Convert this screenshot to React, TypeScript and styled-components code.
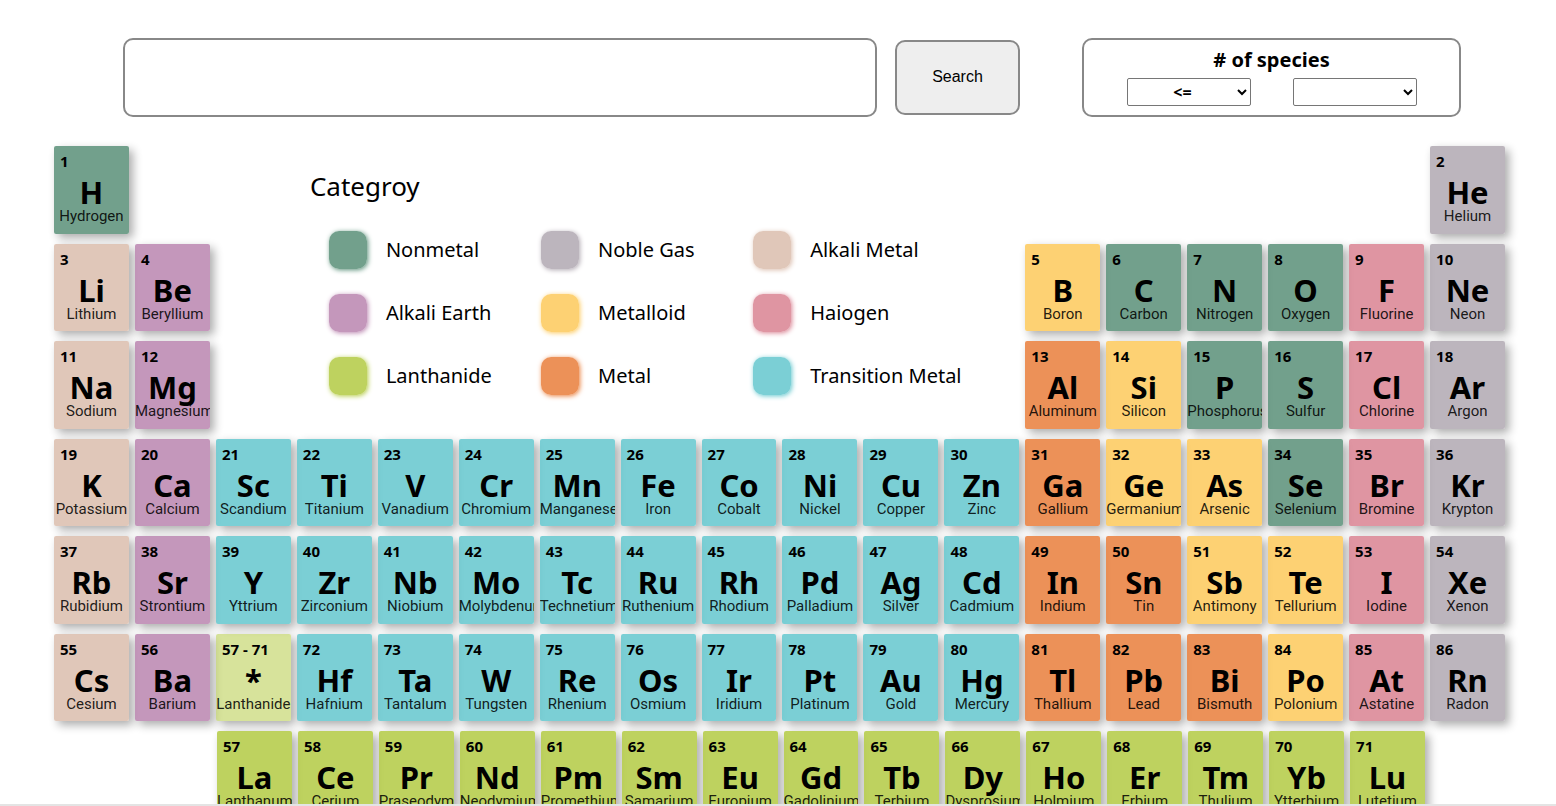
import React from 'react';
import styled, { createGlobalStyle } from 'styled-components';

const GlobalStyle = createGlobalStyle`
  *, *::before, *::after { box-sizing: border-box; }
  body { margin: 0; background: #fff; color: #000; font-family: 'Noto Sans', 'Open Sans', sans-serif; }
`;

const categories = {
  nonmetal: { label: 'Nonmetal', rgb: '89, 143, 120' },
  noble: { label: 'Noble Gas', rgb: '176, 168, 177' },
  alkali: { label: 'Alkali Metal', rgb: '219, 189, 173' },
  earth: { label: 'Alkali Earth', rgb: '186, 133, 175' },
  metalloid: { label: 'Metalloid', rgb: '253, 201, 91' },
  halogen: { label: 'Haiogen', rgb: '217, 130, 146' },
  lanthanide: { label: 'Lanthanide', rgb: '179, 202, 67' },
  metal: { label: 'Metal', rgb: '233, 126, 59' },
  transition: { label: 'Transition Metal', rgb: '100, 199, 206' },
};

type Category = keyof typeof categories;
type Entry = [string, string, string, Category, number, number];

const k: Record<string, Category> = {
  n: 'nonmetal', g: 'noble', a: 'alkali', e: 'earth', d: 'metalloid',
  h: 'halogen', l: 'lanthanide', m: 'metal', t: 'transition',
};

const elements: Entry[] = [
  ['1', 'H', 'Hydrogen', k.n, 1, 1],
  ['2', 'He', 'Helium', k.g, 1, 18],
  ['3', 'Li', 'Lithium', k.a, 2, 1],
  ['4', 'Be', 'Beryllium', k.e, 2, 2],
  ['5', 'B', 'Boron', k.d, 2, 13],
  ['6', 'C', 'Carbon', k.n, 2, 14],
  ['7', 'N', 'Nitrogen', k.n, 2, 15],
  ['8', 'O', 'Oxygen', k.n, 2, 16],
  ['9', 'F', 'Fluorine', k.h, 2, 17],
  ['10', 'Ne', 'Neon', k.g, 2, 18],
  ['11', 'Na', 'Sodium', k.a, 3, 1],
  ['12', 'Mg', 'Magnesium', k.e, 3, 2],
  ['13', 'Al', 'Aluminum', k.m, 3, 13],
  ['14', 'Si', 'Silicon', k.d, 3, 14],
  ['15', 'P', 'Phosphorus', k.n, 3, 15],
  ['16', 'S', 'Sulfur', k.n, 3, 16],
  ['17', 'Cl', 'Chlorine', k.h, 3, 17],
  ['18', 'Ar', 'Argon', k.g, 3, 18],
  ['19', 'K', 'Potassium', k.a, 4, 1],
  ['20', 'Ca', 'Calcium', k.e, 4, 2],
  ['21', 'Sc', 'Scandium', k.t, 4, 3],
  ['22', 'Ti', 'Titanium', k.t, 4, 4],
  ['23', 'V', 'Vanadium', k.t, 4, 5],
  ['24', 'Cr', 'Chromium', k.t, 4, 6],
  ['25', 'Mn', 'Manganese', k.t, 4, 7],
  ['26', 'Fe', 'Iron', k.t, 4, 8],
  ['27', 'Co', 'Cobalt', k.t, 4, 9],
  ['28', 'Ni', 'Nickel', k.t, 4, 10],
  ['29', 'Cu', 'Copper', k.t, 4, 11],
  ['30', 'Zn', 'Zinc', k.t, 4, 12],
  ['31', 'Ga', 'Gallium', k.m, 4, 13],
  ['32', 'Ge', 'Germanium', k.d, 4, 14],
  ['33', 'As', 'Arsenic', k.d, 4, 15],
  ['34', 'Se', 'Selenium', k.n, 4, 16],
  ['35', 'Br', 'Bromine', k.h, 4, 17],
  ['36', 'Kr', 'Krypton', k.g, 4, 18],
  ['37', 'Rb', 'Rubidium', k.a, 5, 1],
  ['38', 'Sr', 'Strontium', k.e, 5, 2],
  ['39', 'Y', 'Yttrium', k.t, 5, 3],
  ['40', 'Zr', 'Zirconium', k.t, 5, 4],
  ['41', 'Nb', 'Niobium', k.t, 5, 5],
  ['42', 'Mo', 'Molybdenum', k.t, 5, 6],
  ['43', 'Tc', 'Technetium', k.t, 5, 7],
  ['44', 'Ru', 'Ruthenium', k.t, 5, 8],
  ['45', 'Rh', 'Rhodium', k.t, 5, 9],
  ['46', 'Pd', 'Palladium', k.t, 5, 10],
  ['47', 'Ag', 'Silver', k.t, 5, 11],
  ['48', 'Cd', 'Cadmium', k.t, 5, 12],
  ['49', 'In', 'Indium', k.m, 5, 13],
  ['50', 'Sn', 'Tin', k.m, 5, 14],
  ['51', 'Sb', 'Antimony', k.d, 5, 15],
  ['52', 'Te', 'Tellurium', k.d, 5, 16],
  ['53', 'I', 'Iodine', k.h, 5, 17],
  ['54', 'Xe', 'Xenon', k.g, 5, 18],
  ['55', 'Cs', 'Cesium', k.a, 6, 1],
  ['56', 'Ba', 'Barium', k.e, 6, 2],
  ['57 - 71', '*', 'Lanthanide', k.l, 6, 3],
  ['72', 'Hf', 'Hafnium', k.t, 6, 4],
  ['73', 'Ta', 'Tantalum', k.t, 6, 5],
  ['74', 'W', 'Tungsten', k.t, 6, 6],
  ['75', 'Re', 'Rhenium', k.t, 6, 7],
  ['76', 'Os', 'Osmium', k.t, 6, 8],
  ['77', 'Ir', 'Iridium', k.t, 6, 9],
  ['78', 'Pt', 'Platinum', k.t, 6, 10],
  ['79', 'Au', 'Gold', k.t, 6, 11],
  ['80', 'Hg', 'Mercury', k.t, 6, 12],
  ['81', 'Tl', 'Thallium', k.m, 6, 13],
  ['82', 'Pb', 'Lead', k.m, 6, 14],
  ['83', 'Bi', 'Bismuth', k.m, 6, 15],
  ['84', 'Po', 'Polonium', k.d, 6, 16],
  ['85', 'At', 'Astatine', k.h, 6, 17],
  ['86', 'Rn', 'Radon', k.g, 6, 18],
];

const lanthanides: [string, string][] = [
  ['La', 'Lanthanum'], ['Ce', 'Cerium'], ['Pr', 'Praseodymium'], ['Nd', 'Neodymium'],
  ['Pm', 'Promethium'], ['Sm', 'Samarium'], ['Eu', 'Europium'], ['Gd', 'Gadolinium'],
  ['Tb', 'Terbium'], ['Dy', 'Dysprosium'], ['Ho', 'Holmium'], ['Er', 'Erbium'],
  ['Tm', 'Thulium'], ['Yb', 'Ytterbium'], ['Lu', 'Lutetium'],
];

const Page = styled.main`
  height: 100vh;
  overflow: hidden;
  border-bottom: 2px solid #e4e4e4;
`;

const SearchBar = styled.form`
  display: flex;
  align-items: center;
  padding: 38px 95px 0 123px;
`;

const SearchInput = styled.input`
  flex: 1;
  min-width: 0;
  height: 79px;
  padding: 0 16px;
  border: 2px solid #888;
  border-radius: 10px;
  font: 20px 'Noto Sans', sans-serif;
`;

const SearchButton = styled.button`
  width: 125px;
  height: 75px;
  margin: 0 62px 0 18px;
  padding: 0 0 2px;
  border: 2px solid #888;
  border-radius: 10px;
  background: #eee;
  color: #000;
  font: 16px 'Liberation Sans', Arial, sans-serif;
`;

const SpeciesBox = styled.fieldset`
  display: flex;
  flex-direction: column;
  align-items: center;
  width: 379px;
  height: 79px;
  margin: 0;
  padding: 2px 0 0;
  border: 2px solid #888;
  border-radius: 10px;
`;

const SpeciesTitle = styled.div`
  font-size: 20px;
  font-weight: 700;
  line-height: 36px;
`;

const SelectRow = styled.div`
  display: flex;
  gap: 42px;
`;

const Select = styled.select`
  width: 124px;
  height: 28px;
  border: 1px solid #767676;
  border-radius: 2px;
  background: #fff;
  color: #000;
  font: 700 16px 'Noto Sans', sans-serif;
  text-align: center;
`;

const Table = styled.section`
  display: grid;
  grid-template-columns: repeat(18, minmax(0, 1fr));
  gap: 10px 6px;
  margin: 29px 51px 0 54px;
`;

const LanthanideRow = styled.section`
  display: grid;
  grid-template-columns: repeat(15, minmax(0, 1fr));
  gap: 6px;
  margin: 10px 131px 0 217px;
`;

const Tile = styled.button<{ $rgb: string; $faded?: boolean; $row?: number; $col?: number }>`
  grid-row: ${(p) => p.$row ?? 'auto'};
  grid-column: ${(p) => p.$col ?? 'auto'};
  display: flex;
  flex-direction: column;
  aspect-ratio: 107 / 125;
  min-width: 0;
  padding: 5px 0 0;
  overflow: hidden;
  border: 0;
  border-radius: 2px;
  background: rgba(${(p) => p.$rgb}, ${(p) => (p.$faded ? 0.53 : 0.85)});
  box-shadow: 4px 4px 10px rgba(0, 0, 0, 0.33);
  color: #000;
  font-family: 'Noto Sans', 'Open Sans', sans-serif;
`;

const AtomicNumber = styled.span`
  align-self: flex-start;
  padding-left: 6px;
  font-size: 15px;
  font-weight: 700;
  line-height: 20px;
  white-space: nowrap;
`;

const AtomicSymbol = styled.span`
  align-self: center;
  margin-top: 4px;
  font-size: 31px;
  font-weight: 700;
  line-height: 34px;
`;

const ElementName = styled.span`
  width: 100%;
  color: rgba(0, 0, 0, 0.87);
  font-family: Roboto, sans-serif;
  font-size: 15px;
  line-height: 14px;
  text-align: center;
  white-space: nowrap;
`;

const Legend = styled.div`
  grid-row: 1 / 4;
  grid-column: 3 / 13;
  padding: 21px 54px 0 94px;
`;

const LegendTitle = styled.h2`
  margin: 0;
  font-size: 26px;
  font-weight: 400;
  line-height: 38px;
`;

const LegendList = styled.ul`
  display: grid;
  grid-template-columns: repeat(3, minmax(0, 1fr));
  gap: 25px 0;
  margin: 26px 0 0 19px;
  padding: 0;
  list-style: none;
`;

const LegendItem = styled.li`
  display: flex;
  align-items: center;
  gap: 19px;
  font-size: 20px;
  line-height: 38px;
  white-space: nowrap;
`;

const Swatch = styled.span<{ $rgb: string }>`
  flex: none;
  width: 38px;
  height: 38px;
  border-radius: 10px;
  background: rgba(${(p) => p.$rgb}, 0.85);
  box-shadow: 1px 1px 5px rgb(${(p) => p.$rgb});
`;

interface ElementTileProps {
  number: string;
  symbol: string;
  name: string;
  category: Category;
  row?: number;
  col?: number;
}

function ElementTile({ number, symbol, name, category, row, col }: ElementTileProps) {
  return (
    <Tile type="button" $rgb={categories[category].rgb} $faded={symbol === '*'} $row={row} $col={col}>
      <AtomicNumber>{number}</AtomicNumber>
      <AtomicSymbol>{symbol}</AtomicSymbol>
      <ElementName>{name}</ElementName>
    </Tile>
  );
}

export default function App() {
  return (
    <Page>
      <GlobalStyle />
      <SearchBar onSubmit={(e) => e.preventDefault()}>
        <SearchInput type="text" aria-label="Search materials" />
        <SearchButton type="submit">Search</SearchButton>
        <SpeciesBox aria-labelledby="species-title">
          <SpeciesTitle id="species-title"># of species</SpeciesTitle>
          <SelectRow>
            <Select aria-label="Comparison" defaultValue="<=">
              <option>{'<='}</option>
              <option>=</option>
              <option>{'>='}</option>
            </Select>
            <Select aria-label="Number of species" defaultValue="">
              <option value=""></option>
              <option>1</option>
              <option>2</option>
              <option>3</option>
            </Select>
          </SelectRow>
        </SpeciesBox>
      </SearchBar>
      <Table>
        <Legend>
          <LegendTitle>Categroy</LegendTitle>
          <LegendList>
            {Object.values(categories).map(({ label, rgb }) => (
              <LegendItem key={label}>
                <Swatch $rgb={rgb} />
                {label}
              </LegendItem>
            ))}
          </LegendList>
        </Legend>
        {elements.map(([number, symbol, name, category, row, col]) => (
          <ElementTile key={symbol} {...{ number, symbol, name, category, row, col }} />
        ))}
      </Table>
      <LanthanideRow>
        {lanthanides.map(([symbol, name], i) => (
          <ElementTile key={symbol} number={String(57 + i)} symbol={symbol} name={name} category="lanthanide" />
        ))}
      </LanthanideRow>
    </Page>
  );
}
